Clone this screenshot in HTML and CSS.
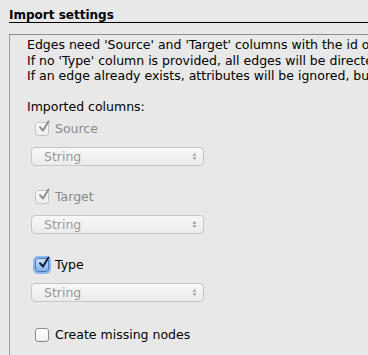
FILE: index.html
```
<!DOCTYPE html>
<html>
<head>
<meta charset="utf-8">
<link rel="stylesheet" href="styles.css">
</head>
<body>
<div class="title">Import settings</div>
<div class="panel">
  <div class="info">
    <div class="line">Edges need 'Source' and 'Target' columns with the id of the nodes.</div>
    <div class="line">If no 'Type' column is provided, all edges will be directed.</div>
    <div class="line">If an edge already exists, attributes will be ignored, but weights will be merged.</div>
  </div>
  <div class="cols-label">Imported columns:</div>
  <div class="group">
    <label class="check disabled"><span class="box checked"><svg viewBox="0 0 14 14"><path d="M3 7.2 L6 10.5 L11.5 1.5" /></svg></span>Source</label>
    <div class="select"><span>String</span><span class="arrows"><svg viewBox="0 0 6 10"><path d="M0.5 4 L3 0.8 L5.5 4 Z M0.5 6 L3 9.2 L5.5 6 Z"/></svg></span></div>
  </div>
  <div class="group">
    <label class="check disabled"><span class="box checked"><svg viewBox="0 0 14 14"><path d="M3 7.2 L6 10.5 L11.5 1.5" /></svg></span>Target</label>
    <div class="select"><span>String</span><span class="arrows"><svg viewBox="0 0 6 10"><path d="M0.5 4 L3 0.8 L5.5 4 Z M0.5 6 L3 9.2 L5.5 6 Z"/></svg></span></div>
  </div>
  <div class="group last">
    <label class="check active"><span class="box checked"><svg viewBox="0 0 14 14"><path d="M3 7.2 L6 10.5 L11.5 1.5" /></svg></span>Type</label>
    <div class="select"><span>String</span><span class="arrows"><svg viewBox="0 0 6 10"><path d="M0.5 4 L3 0.8 L5.5 4 Z M0.5 6 L3 9.2 L5.5 6 Z"/></svg></span></div>
  </div>
  <label class="check plain"><span class="box"></span>Create missing nodes</label>
</div>
</body>
</html>
```
FILE: styles.css
```
html, body {
  margin: 0;
  padding: 0;
  background: #e8e8e8;
  height: 100%;
  overflow: hidden;
}
body {
  font-family: "Lucida Grande", "DejaVu Sans", sans-serif;
  font-size: 12.5px;
  color: #000;
  padding-top: 8px;
  box-sizing: border-box;
  display: flex;
  flex-direction: column;
}
.title {
  margin-left: 9px;
  font-weight: bold;
  font-size: 12px;
  line-height: 14px;
  border-bottom: 1px solid #000;
}
.panel {
  flex: 1;
  min-height: 0;
  margin-left: 9px;
  margin-top: 11px;
  border-top: 1px solid #8e8e8e;
  border-left: 1px solid #9c9c9c;
  padding-left: 17px;
  padding-top: 2px;
  white-space: nowrap;
  overflow: hidden;
}
.line {
  line-height: 15.5px;
}
.info {
  margin-bottom: 15px;
}
.cols-label {
  line-height: 15px;
  margin-bottom: 8px;
}
.group {
  display: flex;
  flex-direction: column;
  align-items: flex-start;
  margin-bottom: 24px;
}
.group.last {
  margin-bottom: 26px;
}
.check {
  display: flex;
  align-items: center;
  gap: 6px;
  margin-left: 8px;
  height: 14px;
  line-height: 14px;
}
.check.disabled { color: #8a8a8a; }
.box {
  width: 12px;
  height: 12px;
  border: 1px solid #9a9a9a;
  border-radius: 3px;
  background: linear-gradient(#ffffff, #f0f0f0);
  position: relative;
  flex: none;
}
.box svg {
  width: 14px;
  height: 14px;
  position: absolute;
  left: 1px;
  top: -3px;
  overflow: visible;
}
.box svg path {
  fill: none;
  stroke: #111;
  stroke-width: 2;
  stroke-linecap: round;
  stroke-linejoin: round;
}
.disabled .box {
  border-color: #c4c4c4;
  background: linear-gradient(#fafafa, #eeeeee);
}
.disabled .box svg path {
  stroke: #8e8e8e;
}
.active .box {
  border-color: #4a78b8;
  background: linear-gradient(#cfe2fa, #7fb0ea);
  box-shadow: 0 0 0 2px #8ab7ec;
}
.active .box svg path {
  stroke: #0c1f3a;
}
.plain .box {
  border-color: #8a8a8a;
}
.select {
  margin-left: 4px;
  margin-top: 11px;
  width: 159px;
  height: 17px;
  border: 1px solid #c6c6c6;
  border-radius: 4px;
  background: linear-gradient(#f7f7f7, #ececec);
  display: flex;
  align-items: center;
  justify-content: space-between;
  padding-left: 12px;
  color: #9a9a9a;
  font-size: 12.5px;
}
.arrows {
  display: flex;
  margin-right: 6px;
}
.arrows svg {
  width: 5px;
  height: 9px;
  fill: #a0a0a0;
}
```
